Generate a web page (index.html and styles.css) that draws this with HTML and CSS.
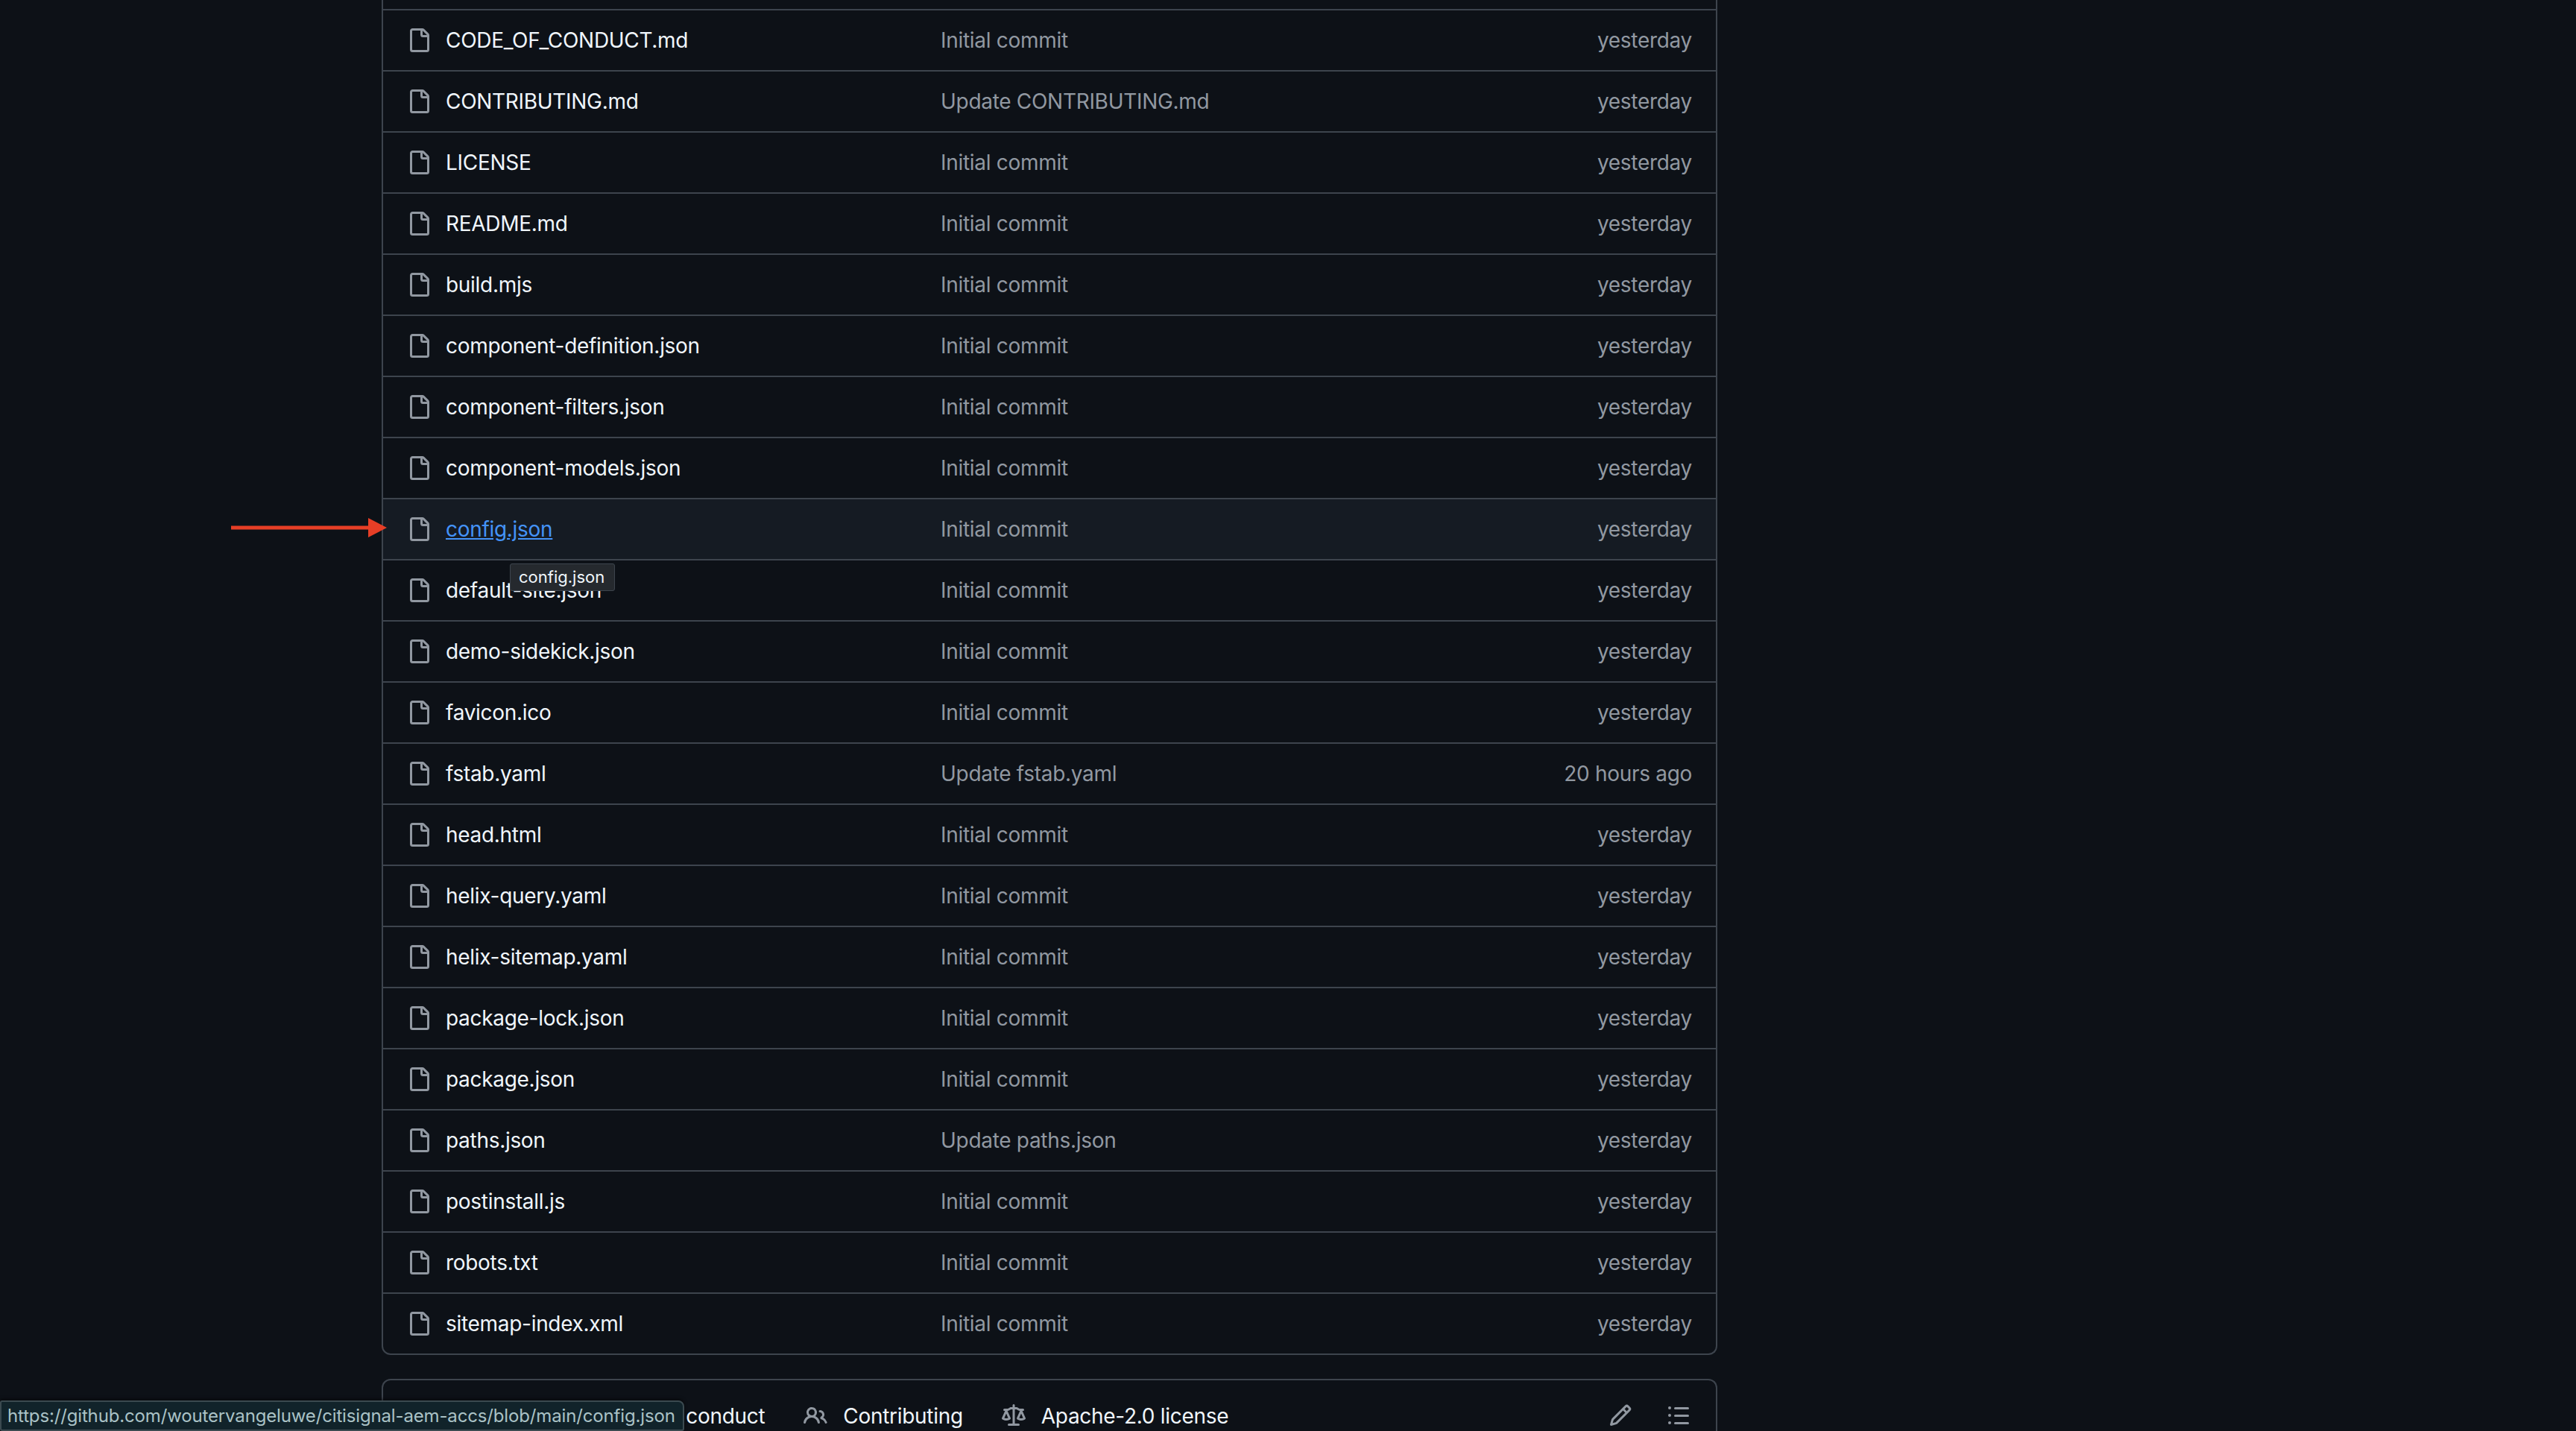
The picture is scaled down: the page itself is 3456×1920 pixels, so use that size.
FILE: index.html
```html
<!DOCTYPE html>
<html lang="en">
<head>
    <meta charset="UTF-8">
    <title>citisignal-aem-accs</title>
    <link rel="stylesheet" href="styles.css">
</head>
<body>
    <svg class="sprite" width="0" height="0">
        <symbol id="file" viewBox="0 0 16 16"><path d="M2 1.75C2 .784 2.784 0 3.75 0h6.586c.464 0 .909.184 1.237.513l2.914 2.914c.329.328.513.773.513 1.237v9.586A1.75 1.75 0 0 1 13.25 16h-9.5A1.75 1.75 0 0 1 2 14.25Zm1.75-.25a.25.25 0 0 0-.25.25v12.5c0 .138.112.25.25.25h9.5a.25.25 0 0 0 .25-.25V6h-2.75A1.75 1.75 0 0 1 9 4.25V1.5Zm6.75.062V4.25c0 .138.112.25.25.25h2.688l-.011-.013-2.914-2.914-.013-.011Z"/></symbol>
    </svg>

    <div class="page">
        <div class="files">
            <div class="row-cut"></div>
            <div class="row"><svg class="icon"><use href="#file"/></svg><span class="name">CODE_OF_CONDUCT.md</span><span class="msg">Initial commit</span><span class="age">yesterday</span></div>
            <div class="row"><svg class="icon"><use href="#file"/></svg><span class="name">CONTRIBUTING.md</span><span class="msg">Update CONTRIBUTING.md</span><span class="age">yesterday</span></div>
            <div class="row"><svg class="icon"><use href="#file"/></svg><span class="name">LICENSE</span><span class="msg">Initial commit</span><span class="age">yesterday</span></div>
            <div class="row"><svg class="icon"><use href="#file"/></svg><span class="name">README.md</span><span class="msg">Initial commit</span><span class="age">yesterday</span></div>
            <div class="row"><svg class="icon"><use href="#file"/></svg><span class="name">build.mjs</span><span class="msg">Initial commit</span><span class="age">yesterday</span></div>
            <div class="row"><svg class="icon"><use href="#file"/></svg><span class="name">component-definition.json</span><span class="msg">Initial commit</span><span class="age">yesterday</span></div>
            <div class="row"><svg class="icon"><use href="#file"/></svg><span class="name">component-filters.json</span><span class="msg">Initial commit</span><span class="age">yesterday</span></div>
            <div class="row"><svg class="icon"><use href="#file"/></svg><span class="name">component-models.json</span><span class="msg">Initial commit</span><span class="age">yesterday</span></div>
            <div class="row row-hover">
                <svg class="arrow" width="220" height="28" viewBox="0 0 220 28"><path d="M0 11.5h184V1l25 13-25 13V16.500H0Z"/></svg>
                <svg class="icon"><use href="#file"/></svg><span class="name"><a href="#">config.json</a><span class="tooltip">config.json</span></span><span class="msg">Initial commit</span><span class="age">yesterday</span>
            </div>
            <div class="row"><svg class="icon"><use href="#file"/></svg><span class="name">default-site.json</span><span class="msg">Initial commit</span><span class="age">yesterday</span></div>
            <div class="row"><svg class="icon"><use href="#file"/></svg><span class="name">demo-sidekick.json</span><span class="msg">Initial commit</span><span class="age">yesterday</span></div>
            <div class="row"><svg class="icon"><use href="#file"/></svg><span class="name">favicon.ico</span><span class="msg">Initial commit</span><span class="age">yesterday</span></div>
            <div class="row"><svg class="icon"><use href="#file"/></svg><span class="name">fstab.yaml</span><span class="msg">Update fstab.yaml</span><span class="age">20 hours ago</span></div>
            <div class="row"><svg class="icon"><use href="#file"/></svg><span class="name">head.html</span><span class="msg">Initial commit</span><span class="age">yesterday</span></div>
            <div class="row"><svg class="icon"><use href="#file"/></svg><span class="name">helix-query.yaml</span><span class="msg">Initial commit</span><span class="age">yesterday</span></div>
            <div class="row"><svg class="icon"><use href="#file"/></svg><span class="name">helix-sitemap.yaml</span><span class="msg">Initial commit</span><span class="age">yesterday</span></div>
            <div class="row"><svg class="icon"><use href="#file"/></svg><span class="name">package-lock.json</span><span class="msg">Initial commit</span><span class="age">yesterday</span></div>
            <div class="row"><svg class="icon"><use href="#file"/></svg><span class="name">package.json</span><span class="msg">Initial commit</span><span class="age">yesterday</span></div>
            <div class="row"><svg class="icon"><use href="#file"/></svg><span class="name">paths.json</span><span class="msg">Update paths.json</span><span class="age">yesterday</span></div>
            <div class="row"><svg class="icon"><use href="#file"/></svg><span class="name">postinstall.js</span><span class="msg">Initial commit</span><span class="age">yesterday</span></div>
            <div class="row"><svg class="icon"><use href="#file"/></svg><span class="name">robots.txt</span><span class="msg">Initial commit</span><span class="age">yesterday</span></div>
            <div class="row"><svg class="icon"><use href="#file"/></svg><span class="name">sitemap-index.xml</span><span class="msg">Initial commit</span><span class="age">yesterday</span></div>
        </div>

        <div class="readme">
            <div class="tab"><span>Code of conduct</span></div>
            <div class="tab">
                <svg class="icon" viewBox="0 0 16 16"><path d="M2 5.5a3.5 3.5 0 1 1 5.898 2.549 5.508 5.508 0 0 1 3.034 4.084.75.75 0 1 1-1.482.235 4 4 0 0 0-7.9 0 .75.75 0 0 1-1.482-.236A5.507 5.507 0 0 1 3.102 8.05 3.493 3.493 0 0 1 2 5.5ZM11 4a3.001 3.001 0 0 1 2.22 5.018 5.01 5.01 0 0 1 2.56 3.012.749.749 0 0 1-.885.954.752.752 0 0 1-.549-.514 3.507 3.507 0 0 0-2.522-2.372.75.75 0 0 1-.574-.73v-.352a.75.75 0 0 1 .416-.672A1.5 1.5 0 0 0 11 5.500.75.75 0 0 1 11 4Zm-5.500-.5a2 2 0 1 0-.001 3.999A2 2 0 0 0 5.500 3.500Z"/></svg>
                <span>Contributing</span>
            </div>
            <div class="tab">
                <svg class="icon" viewBox="0 0 16 16"><path d="M8.750.750V2h.985c.304 0 .603.080.867.231l1.290.736c.038.022.080.033.124.033h2.234a.750.750 0 0 1 0 1.500h-.427l2.111 4.692a.750.750 0 0 1-.154.838l-.530-.530.529.531-.001.002-.002.002-.006.006-.006.005-.010.010-.045.040c-.210.176-.441.327-.686.450C14.556 10.780 13.880 11 13 11a4.498 4.498 0 0 1-2.023-.454 3.544 3.544 0 0 1-.686-.450l-.045-.040-.016-.015-.006-.006-.004-.004v-.001a.750.750 0 0 1-.154-.838L12.178 4.500h-.162c-.305 0-.604-.079-.868-.231l-1.290-.736a.245.245 0 0 0-.124-.033H8.750V13h2.500a.750.750 0 0 1 0 1.500h-6.500a.750.750 0 0 1 0-1.500h2.500V3.500h-.984a.245.245 0 0 0-.124.033l-1.289.737c-.265.150-.564.230-.869.230h-.162l2.112 4.692a.750.750 0 0 1-.154.838l-.530-.530.529.531-.001.002-.002.002-.006.006-.016.015-.045.040c-.210.176-.441.327-.686.450C4.556 10.780 3.880 11 3 11a4.498 4.498 0 0 1-2.023-.454 3.544 3.544 0 0 1-.686-.450l-.045-.040-.016-.015-.006-.006-.004-.004v-.001a.750.750 0 0 1-.154-.838L2.178 4.500H1.750a.750.750 0 0 1 0-1.500h2.234a.249.249 0 0 0 .125-.033l1.288-.737c.265-.150.564-.230.869-.230h.984V.750a.750.750 0 0 1 1.500 0Zm2.945 8.477c.285.135.718.273 1.305.273s1.020-.138 1.305-.273L13 6.327Zm-10 0c.285.135.718.273 1.305.273s1.020-.138 1.305-.273L3 6.327Z"/></svg>
                <span>Apache-2.0 license</span>
            </div>
            <div class="tools">
                <svg class="icon" viewBox="0 0 16 16"><path d="M11.013 1.427a1.750 1.750 0 0 1 2.474 0l1.086 1.086a1.750 1.750 0 0 1 0 2.474l-8.610 8.610c-.210.210-.470.364-.756.445l-3.251.930a.750.750 0 0 1-.927-.928l.929-3.250c.081-.286.235-.547.445-.758l8.610-8.610Zm.176 4.823L9.750 4.810l-6.286 6.287a.253.253 0 0 0-.064.108l-.558 1.953 1.953-.558a.253.253 0 0 0 .108-.064Zm1.238-3.763a.250.250 0 0 0-.354 0L10.811 3.750l1.439 1.440 1.263-1.263a.250.250 0 0 0 0-.354Z"/></svg>
                <svg class="icon" viewBox="0 0 16 16"><path d="M5.750 2.500h8.500a.750.750 0 0 1 0 1.500h-8.500a.750.750 0 0 1 0-1.500Zm0 5h8.500a.750.750 0 0 1 0 1.500h-8.500a.750.750 0 0 1 0-1.500Zm0 5h8.500a.750.750 0 0 1 0 1.500h-8.500a.750.750 0 0 1 0-1.500ZM2 14a1 1 0 1 1 0-2 1 1 0 0 1 0 2Zm1-6a1 1 0 1 1-2 0 1 1 0 0 1 2 0ZM2 4a1 1 0 1 1 0-2 1 1 0 0 1 0 2Z"/></svg>
            </div>
        </div>
    </div>

    <div class="status">https://github.com/woutervangeluwe/citisignal-aem-accs/blob/main/config.json</div>
</body>
</html>
```

FILE: styles.css
```css
html, body {
    margin: 0;
    height: 1920px;
    overflow: hidden;
}

body {
    background-color: #0d1117;
    color: #f0f6fc;
    font-family: 'Inter', 'Liberation Sans', sans-serif;
    font-size: 28px;
    letter-spacing: -0.3px;
    position: relative;
}

.sprite {
    position: absolute;
}

.page {
    width: 1792px;
    margin-left: 512px;
}

.files {
    border: 2px solid #3d444d;
    border-top: none;
    border-radius: 0 0 12px 12px;
}

.row-cut {
    height: 12px;
    border-bottom: 2px solid #3d444d;
}

.row {
    height: 80px;
    display: flex;
    align-items: center;
    padding: 0 32px;
    border-bottom: 2px solid #3d444d;
    position: relative;
}

.row:last-child {
    border-bottom: none;
}

.row-hover {
    background-color: #151b23;
}

.icon {
    width: 32px;
    height: 32px;
    flex: none;
    fill: #9198a1;
}

.name {
    width: 664px;
    margin-left: 20px;
    position: relative;
}

.name a {
    color: #4493f8;
    text-decoration: underline;
}

.msg {
    flex: 1;
    color: #9198a1;
}

.age {
    color: #9198a1;
}

.arrow {
    position: absolute;
    left: -204px;
    top: 24px;
    fill: #e63e26;
}

.tooltip {
    position: absolute;
    left: 86px;
    top: 63px;
    background-color: #25292e;
    border: 1px solid #3d444d;
    color: #f0f6fc;
    font-size: 22px;
    letter-spacing: 0;
    line-height: 35px;
    padding: 0 13px 0 11px;
    border-radius: 3px;
    z-index: 2;
}

.readme {
    margin-top: 32px;
    height: 120px;
    border: 2px solid #3d444d;
    border-bottom: none;
    border-radius: 12px 12px 0 0;
    display: flex;
    align-items: flex-start;
    padding: 26px 34px 0 295px;
    gap: 52px;
}

.tab {
    display: flex;
    align-items: center;
    gap: 21px;
    height: 44px;
}

.tools {
    margin-left: auto;
    display: flex;
    gap: 46px;
    margin-top: 5px;
}

.status {
    position: absolute;
    left: 0;
    bottom: 0;
    background-color: #11232a;
    border: 2px solid #3b4a50;
    border-radius: 3px 8px 3px 3px;
    box-shadow: 0 -2px 4px rgba(0, 0, 0, 0.5);
    color: #aac2c6;
    font-size: 24px;
    letter-spacing: -0.15px;
    line-height: 37px;
    padding: 0 10px 0 8px;
}
```
